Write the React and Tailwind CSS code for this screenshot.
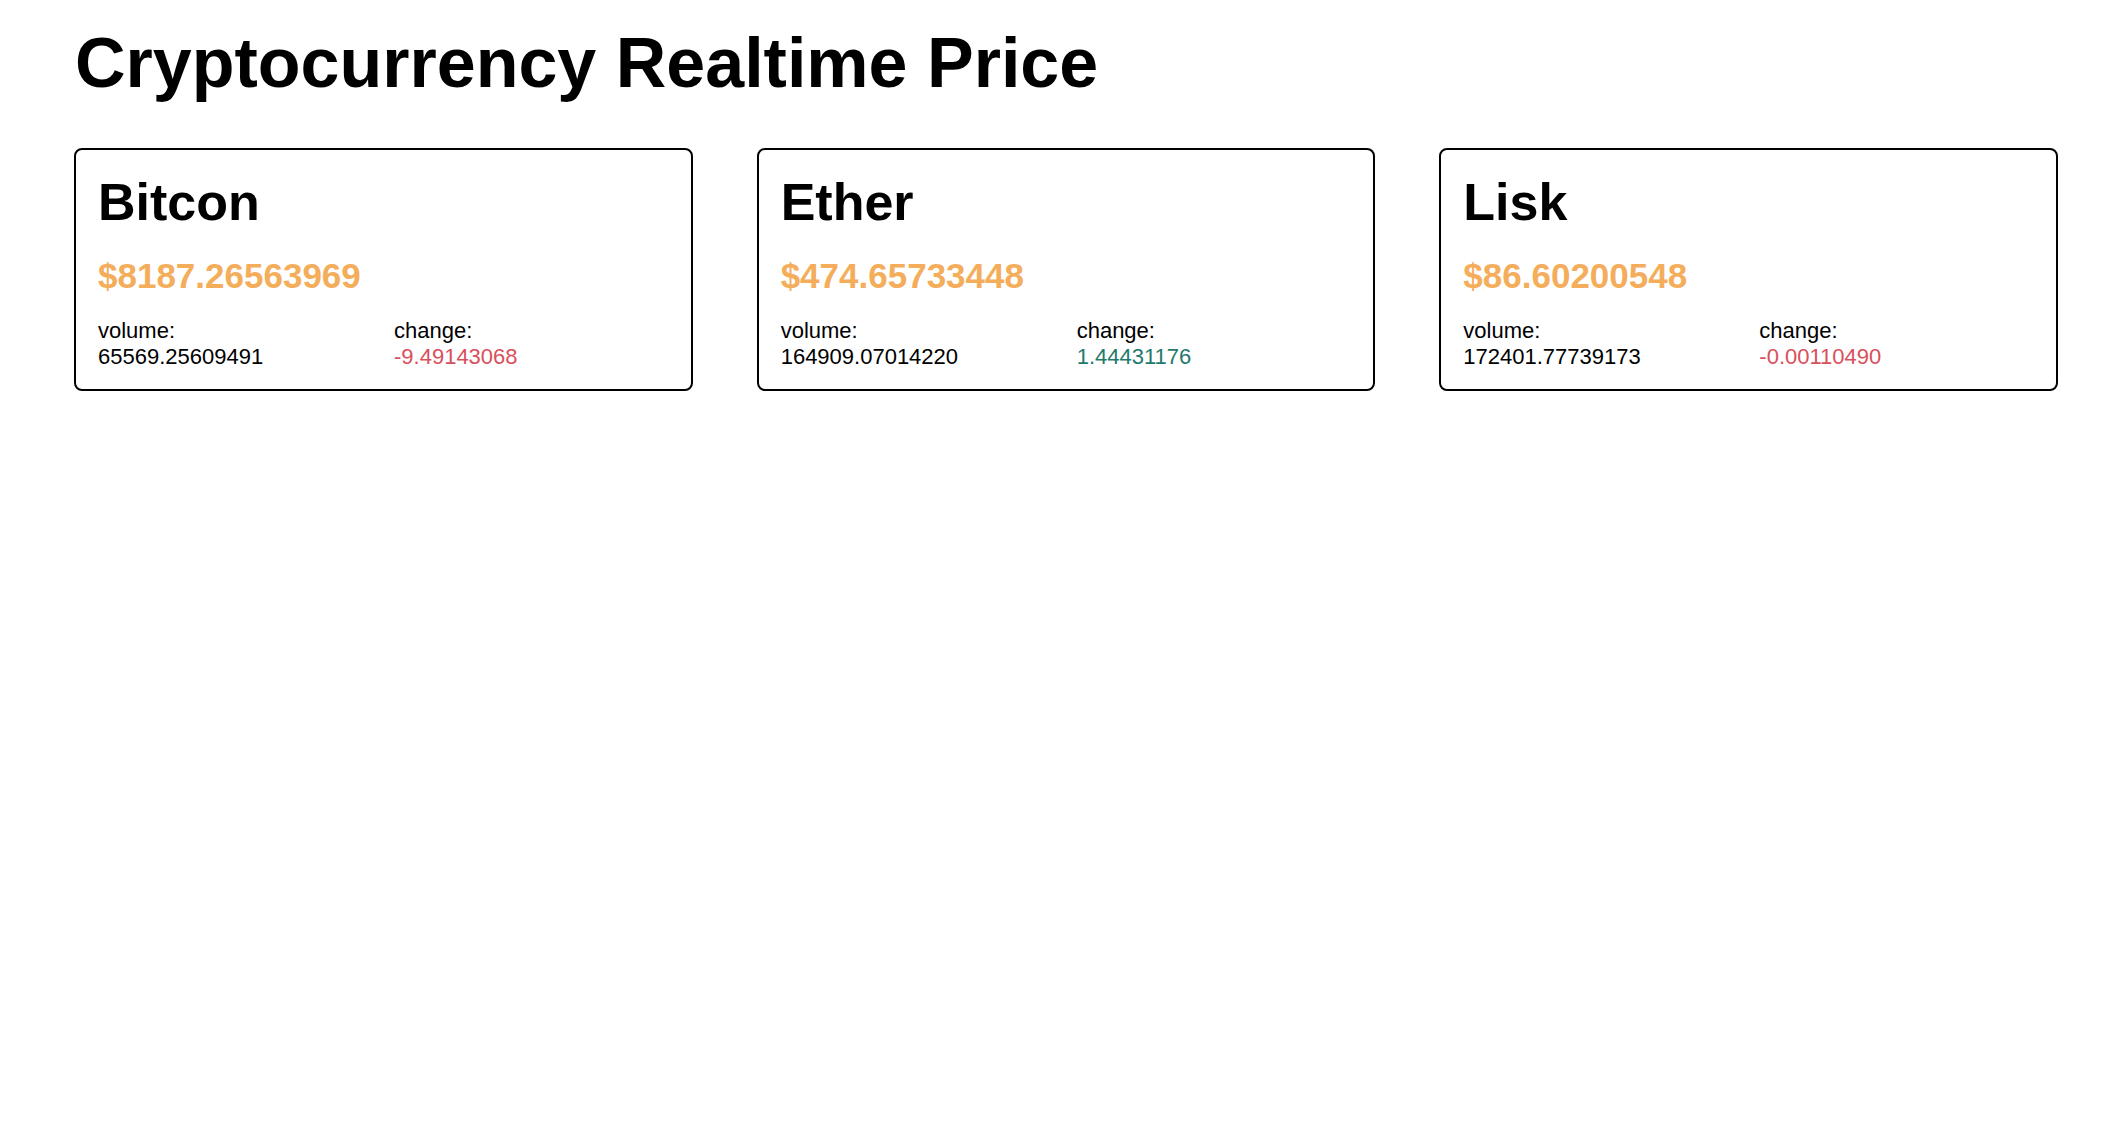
import React from "react";

const coins = [
  { name: "Bitcon", price: "$8187.26563969", volume: "65569.25609491", change: "-9.49143068", up: false },
  { name: "Ether", price: "$474.65733448", volume: "164909.07014220", change: "1.44431176", up: true },
  { name: "Lisk", price: "$86.60200548", volume: "172401.77739173", change: "-0.00110490", up: false },
];

export default function App() {
  return (
    <div className="min-h-screen bg-white text-black pl-[74px] pr-[70px] pt-[23px]" style={{ fontFamily: '"Liberation Sans", Arial, Helvetica, sans-serif' }}>
      <h1 className="text-[70px] leading-[80px] font-bold pl-[1px]">Cryptocurrency Realtime Price</h1>
      <div className="grid grid-cols-3 gap-[64px] mt-[45px]">
        {coins.map((c) => (
          <div key={c.name} className="border-2 border-black rounded-[8px] px-[22px] pt-[22px] pb-[19px]">
            <h2 className="text-[52px] leading-[60px] font-bold">{c.name}</h2>
            <div className="text-[35px] leading-[40px] font-bold text-[#f4ad5a] mt-[24px]">{c.price}</div>
            <div className="flex mt-[22px] text-[22px] leading-[26px]">
              <div className="w-[296px]">
                <div>volume:</div>
                <div>{c.volume}</div>
              </div>
              <div>
                <div>change:</div>
                <div className={c.up ? "text-[#1f7a6c]" : "text-[#d9505c]"}>{c.change}</div>
              </div>
            </div>
          </div>
        ))}
      </div>
    </div>
  );
}
